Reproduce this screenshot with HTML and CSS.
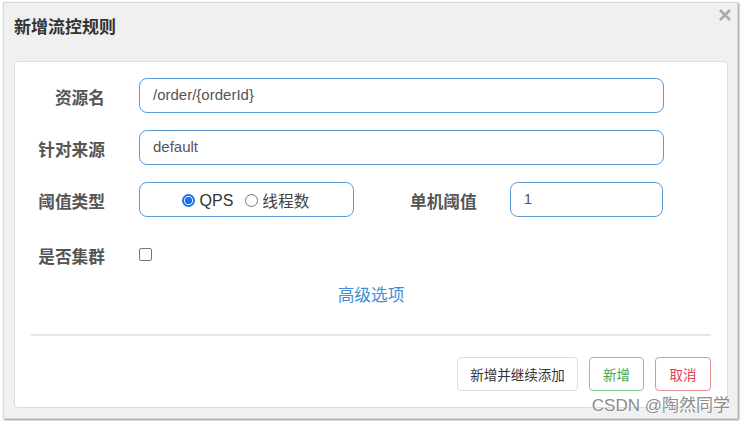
FILE: index.html
```html
<!DOCTYPE html>
<html lang="zh-CN">
<head>
<meta charset="utf-8">
<title>新增流控规则</title>
<link rel="stylesheet" href="styles.css">
</head>
<body>
<div class="dialog">
  <div class="dialog-header">
    <h3 class="dialog-title">新增流控规则</h3>
    <span class="close" aria-label="关闭">
      <svg width="14" height="14" viewBox="0 0 14 14"><path d="M2 2 L12 12 M12 2 L2 12" stroke="#aaa" stroke-width="2.6" stroke-linecap="butt"/></svg>
    </span>
  </div>
  <div class="panel">
    <div class="form">
      <div class="row">
        <label class="label">资源名</label>
        <div class="input wide">/order/{orderId}</div>
      </div>
      <div class="row">
        <label class="label">针对来源</label>
        <div class="input wide">default</div>
      </div>
      <div class="row">
        <label class="label">阈值类型</label>
        <div class="input radio-box">
          <span class="radio checked"></span><span class="radio-text">QPS</span>
          <span class="radio"></span><span class="radio-text cn">线程数</span>
        </div>
        <label class="label label2">单机阈值</label>
        <div class="input narrow">1</div>
      </div>
      <div class="row row-check">
        <label class="label">是否集群</label>
        <span class="checkbox"></span>
      </div>
      <div class="advanced"><a class="link">高级选项</a></div>
    </div>
    <div class="divider"></div>
    <div class="footer">
      <button class="btn btn-default">新增并继续添加</button>
      <button class="btn btn-success">新增</button>
      <button class="btn btn-danger">取消</button>
    </div>
  </div>
  <div class="watermark">CSDN @陶然同学</div>
</div>
</body>
</html>
```
FILE: styles.css
```css
* { box-sizing: border-box; }
html, body { margin: 0; padding: 0; background: #fff; }
body {
  font-family: "Liberation Sans", "Noto Sans CJK SC", Arial, sans-serif;
  width: 741px;
  height: 421px;
  overflow: hidden;
}
.dialog {
  position: relative;
  margin: 2px 0 0 3px;
  width: 735px;
  height: 417px;
  background: #f0f0f0;
  border: 1px solid #d8d8d8;
  box-shadow: 1px 1px 2px rgba(0,0,0,0.45);
  padding: 0 9px 0 10px;
}
.dialog-header {
  position: relative;
  height: 58px;
}
.dialog-title {
  margin: 0;
  padding-top: 11px;
  font-family: "Noto Sans CJK SC", sans-serif;
  font-size: 17px;
  font-weight: 700;
  color: #333;
  line-height: 24px;
}
.close {
  position: absolute;
  right: -4px;
  top: 5px;
  width: 14px;
  height: 14px;
  display: block;
}
.close svg { display: block; }
.panel {
  background: #fff;
  border: 1px solid #dddddd;
  border-radius: 4px;
  height: 347px;
  padding: 16px 16px 0 16px;
}
.form {
  display: flex;
  flex-direction: column;
}
.row {
  display: flex;
  align-items: center;
  height: 35px;
  margin-bottom: 17px;
}
.label {
  width: 74px;
  text-align: right;
  font-family: "Noto Sans CJK SC", sans-serif;
  font-size: 16.7px;
  font-weight: 700;
  color: #555;
  margin-right: 34px;
  line-height: 20px;
  flex: none;
  padding-top: 2px;
}
.label2 {
  margin-left: 56px;
  width: auto;
  margin-right: 33px;
}
.input {
  height: 35px;
  border: 1px solid #5b9bd5;
  border-radius: 8px;
  font-size: 15px;
  color: #555;
  padding: 0 13px 2px 13px;
  display: flex;
  align-items: center;
  flex: none;
}
.wide { width: 525px; }
.narrow { width: 153px; }
.radio-box {
  width: 215px;
  justify-content: center;
  padding: 1px 2px 0 0;
}
.radio {
  width: 13px;
  height: 13px;
  border-radius: 50%;
  border: 1px solid #767676;
  display: inline-block;
  flex: none;
  margin-top: 1px;
}
.radio.checked {
  background: radial-gradient(circle, #1a73e8 0 3.4px, #fff 4px);
  border-width: 2px;
  border-color: #1a73e8;
}
.radio-text {
  font-size: 16px;
  color: #333;
  margin-left: 5px;
  margin-right: 12px;
  line-height: 20px;
  padding-top: 2px;
}
.radio-text.cn {
  font-family: "Noto Sans CJK SC", sans-serif;
  margin-right: 0;
  font-size: 15.7px;
  color: #444;
  margin-left: 4px;
}
.row-check {
  margin-bottom: 0;
  height: 34px;
}
.checkbox {
  width: 13px;
  height: 13px;
  border: 1px solid #767676;
  border-radius: 2px;
  display: inline-block;
  margin-top: 7px;
}
.row-check .label { margin-top: 7px; }
.advanced {
  text-align: center;
  margin-top: 14px;
  height: 24px;
}
.link {
  font-family: "Noto Sans CJK SC", sans-serif;
  font-size: 16.7px;
  color: #3e8fd4;
  line-height: 24px;
  cursor: pointer;
}
.divider {
  height: 2px;
  background: #e5e5e5;
  margin: 28px 0 0 0;
}
.footer {
  display: flex;
  justify-content: flex-end;
  gap: 11px;
  margin-top: 21px;
}
.btn {
  height: 34px;
  border-radius: 4px;
  background: #fff;
  font-family: "Noto Sans CJK SC", sans-serif;
  font-size: 13.5px;
  padding: 0;
  line-height: 20px;
  white-space: nowrap;
  cursor: pointer;
}
.btn-default { border: 1.5px solid #dcdcdc; color: #333; width: 121px; }
.btn-success { border: 1.5px solid #7fcf8c; color: #3aa853; width: 55px; }
.btn-danger { border: 1.5px solid #ea8e96; color: #e04050; width: 56px; }
.watermark {
  position: absolute;
  right: 7px;
  bottom: 1px;
  font-family: "Liberation Sans", "Noto Sans CJK SC", sans-serif;
  font-size: 17px;
  color: #8c8c8c;
  text-shadow: 0 0 2px #fff, 0 0 1px #fff;
  line-height: 22px;
}
```
